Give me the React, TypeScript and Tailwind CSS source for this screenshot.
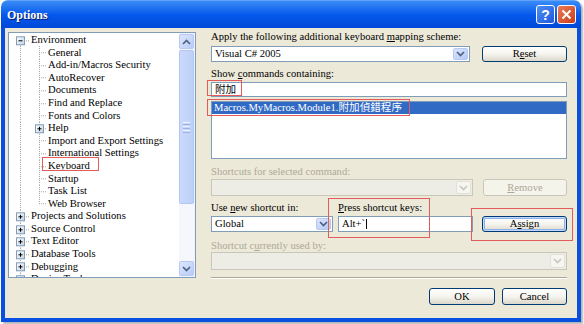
import React from "react";

type Node = { label: string; level: 0 | 1; box?: "plus" | "minus"; first?: boolean; lastChild?: boolean };

const nodes: Node[] = [
  { label: "Environment", level: 0, box: "minus", first: true },
  { label: "General", level: 1 },
  { label: "Add-in/Macros Security", level: 1 },
  { label: "AutoRecover", level: 1 },
  { label: "Documents", level: 1 },
  { label: "Find and Replace", level: 1 },
  { label: "Fonts and Colors", level: 1 },
  { label: "Help", level: 1, box: "plus" },
  { label: "Import and Export Settings", level: 1 },
  { label: "International Settings", level: 1 },
  { label: "Keyboard", level: 1 },
  { label: "Startup", level: 1 },
  { label: "Task List", level: 1 },
  { label: "Web Browser", level: 1, lastChild: true },
  { label: "Projects and Solutions", level: 0, box: "plus" },
  { label: "Source Control", level: 0, box: "plus" },
  { label: "Text Editor", level: 0, box: "plus" },
  { label: "Database Tools", level: 0, box: "plus" },
  { label: "Debugging", level: 0, box: "plus" },
  { label: "Device Tools", level: 0, box: "plus" },
];

const RH = 12.6;
const DOT = "#A5A5A5";

function ExpBox({ cx, cy, kind }: { cx: number; cy: number; kind: "plus" | "minus" }) {
  return (
    <g>
      <rect x={cx - 4} y={cy - 4} width={8} height={8} fill="url(#boxg)" stroke="#7F9DB9" strokeWidth={1} />
      <line x1={cx - 2} y1={cy} x2={cx + 2} y2={cy} stroke="#000" strokeWidth={1} />
      {kind === "plus" && <line x1={cx} y1={cy - 2} x2={cx} y2={cy + 2} stroke="#000" strokeWidth={1} />}
    </g>
  );
}

function Connector({ n }: { n: Node }) {
  const cy = RH / 2;
  const w = n.level === 0 ? 22 : 39;
  return (
    <svg width={w} height={RH} viewBox={`0 0 ${w} ${RH}`} className="shrink-0">
      <defs>
        <linearGradient id="boxg" x1="0" y1="0" x2="1" y2="1">
          <stop offset="0" stopColor="#FFFFFF" />
          <stop offset="1" stopColor="#C6D1E0" />
        </linearGradient>
      </defs>
      {n.level === 0 ? (
        <>
          <line x1={11.5} y1={n.first ? cy : 0} x2={11.5} y2={RH} stroke={DOT} strokeDasharray="1 1" />
          <line x1={11} y1={cy + 0.5} x2={21} y2={cy + 0.5} stroke={DOT} strokeDasharray="1 1" />
          {n.box && <ExpBox cx={11.5} cy={cy + 0.5} kind={n.box} />}
        </>
      ) : (
        <>
          <line x1={11.5} y1={0} x2={11.5} y2={RH} stroke={DOT} strokeDasharray="1 1" />
          <line x1={30.5} y1={0} x2={30.5} y2={n.lastChild ? cy : RH} stroke={DOT} strokeDasharray="1 1" />
          <line x1={30} y1={cy + 0.5} x2={38} y2={cy + 0.5} stroke={DOT} strokeDasharray="1 1" />
          {n.box && <ExpBox cx={30.5} cy={cy + 0.5} kind={n.box} />}
        </>
      )}
    </svg>
  );
}

function Chevron({ color = "#4D6185", up = false }: { color?: string; up?: boolean }) {
  return (
    <svg width="9" height="6" viewBox="0 0 9 6">
      <path
        d={up ? "M1 5 L4.5 1.5 L8 5" : "M1 1 L4.5 4.5 L8 1"}
        fill="none"
        stroke={color}
        strokeWidth="1.7"
      />
    </svg>
  );
}

function ScrollBar() {
  return (
    <div className="w-[16px] flex flex-col bg-[#F1F3FB] py-[1px] pr-[1px]">
      <div className="h-[15px] rounded-[2px] border border-[#B7C9F3] bg-gradient-to-br from-[#DCE6FD] to-[#B9CCF7] flex items-center justify-center">
        <Chevron up />
      </div>
      <div className="mt-[1px] h-[154px] rounded-[2px] border border-[#B3C6F2] bg-gradient-to-r from-[#CAD9FC] to-[#BED0F8] flex flex-col items-center justify-center gap-[1px]">
        <div className="w-[7px] h-[1px] bg-[#EEF3FE]" />
        <div className="w-[7px] h-[1px] bg-[#9DB3E6]" />
        <div className="w-[7px] h-[1px] bg-[#EEF3FE]" />
        <div className="w-[7px] h-[1px] bg-[#9DB3E6]" />
        <div className="w-[7px] h-[1px] bg-[#EEF3FE]" />
        <div className="w-[7px] h-[1px] bg-[#9DB3E6]" />
      </div>
      <div className="flex-1 bg-[#F6F7FC]" />
      <div className="h-[15px] rounded-[2px] border border-[#B7C9F3] bg-gradient-to-br from-[#DCE6FD] to-[#B9CCF7] flex items-center justify-center">
        <Chevron />
      </div>
    </div>
  );
}

function Tree() {
  return (
    <div className="w-[188px] h-[246px] border border-[#7F9DB9] bg-white flex overflow-hidden shrink-0">
      <div className="flex-1 overflow-hidden pt-[0.7px]">
        {nodes.map((n) => (
          <div key={n.label} className="flex items-center h-[12.6px] whitespace-nowrap">
            <Connector n={n} />
            <span className="leading-[12px]">{n.label}</span>
          </div>
        ))}
      </div>
      <ScrollBar />
    </div>
  );
}

function DropBtn({ disabled }: { disabled?: boolean }) {
  return disabled ? (
    <div className="w-[15px] m-[1px] rounded-[2px] border border-[#E2E1DA] bg-[#F6F5EF] flex items-center justify-center">
      <Chevron color="#C9C7BA" />
    </div>
  ) : (
    <div className="w-[15px] m-[1px] rounded-[2px] border border-[#B7C9F3] bg-gradient-to-br from-[#DCE6FD] to-[#B5C9F6] flex items-center justify-center">
      <Chevron />
    </div>
  );
}

const btn =
  "rounded-[3px] border border-[#003C74] bg-gradient-to-b from-[#FFFFFF] via-[#F5F4EE] to-[#DCD7CB] flex items-center justify-center";

export default function App() {
  return (
    <div className="relative w-[584px] h-[324px] bg-white overflow-hidden font-['Liberation_Serif','Noto_Sans_CJK_TC',serif] text-[10.6px] leading-[12px] text-black">
      <div className="ml-[1px] w-[580px] h-[322px] flex flex-col rounded-t-[7px] overflow-hidden shadow-[2px_2px_2px_rgba(0,0,0,0.3)]">
        {/* Title bar */}
        <div className="h-[28px] shrink-0 flex items-center bg-gradient-to-b from-[#3A8CF6] via-[#0659EC] to-[#0048D8] border-t border-[#5FA2F8]">
          <span className="ml-[6px] font-['Liberation_Serif',serif] font-bold text-[12px] text-white [text-shadow:1px_1px_0_#0A1E6E]">
            Options
          </span>
          <div className="ml-auto mr-[5px] flex gap-[2px]">
            <div className="w-[19px] h-[19px] rounded-[3px] border border-white bg-gradient-to-br from-[#4F8DF6] to-[#1F58DA] flex items-center justify-center text-white font-['Liberation_Sans',sans-serif] font-bold text-[14px] leading-none">
              ?
            </div>
            <div className="w-[19px] h-[19px] rounded-[3px] border border-white bg-gradient-to-br from-[#EB7A55] to-[#C83C14] flex items-center justify-center">
              <svg width="11" height="11" viewBox="0 0 11 11">
                <path d="M1.5 1.5 L9.5 9.5 M9.5 1.5 L1.5 9.5" stroke="#fff" strokeWidth="2" />
              </svg>
            </div>
          </div>
        </div>
        {/* Client */}
        <div className="flex-1 flex bg-[#ECE9D8] border-x-[4px] border-b-[4px] border-[#0A50E0] pl-[3px] pt-[4px]">
          <Tree />
          <div className="ml-[15px] w-[356px] flex flex-col -mt-[1px]">
            <div className="h-[12px]">
              Apply the following additional keyboard <span className="underline">m</span>apping scheme:
            </div>
            <div className="mt-[3px] flex h-[16px] gap-[12px]">
              <div className="w-[259px] flex border border-[#7F9DB9] bg-white">
                <div className="flex-1 px-[3px] flex items-center">Visual C# 2005</div>
                <DropBtn />
              </div>
              <div className={`w-[85px] ${btn}`}>
                R<span className="underline">e</span>set
              </div>
            </div>
            <div className="mt-[6px] h-[12px]">
              Show <span className="underline">c</span>ommands containing:
            </div>
            <div className="mt-[2px] h-[15px] border border-[#7F9DB9] bg-white px-[3px] flex items-center">附加</div>
            <div className="mt-[4px] h-[58px] border border-[#7F9DB9] bg-white">
              <div className="h-[12px] bg-[#316AC5] text-white px-[2px] flex items-center">
                Macros.MyMacros.Module1.附加偵錯程序
              </div>
            </div>
            <div className="mt-[7px] h-[12px] text-[#ACA899]">
              Shortcuts for selected command:
            </div>
            <div className="mt-[1px] flex h-[17px] gap-[10px]">
              <div className="w-[262px] flex border border-[#C9C7BA] bg-[#EEEDE5]">
                <div className="flex-1" />
                <DropBtn disabled />
              </div>
              <div className="w-[84px] rounded-[3px] border border-[#C9C7BA] bg-[#F5F4EA] text-[#ACA899] flex items-center justify-center">
                <span className="underline">R</span>emove
              </div>
            </div>
            <div className="mt-[6px] h-[12px] flex">
              <div className="w-[127px]">
                Use <span className="underline">n</span>ew shortcut in:
              </div>
              <div>
                <span className="underline">P</span>ress shortcut keys:
              </div>
            </div>
            <div className="mt-[2px] flex h-[16px]">
              <div className="w-[122px] flex border border-[#7F9DB9] bg-white">
                <div className="flex-1 px-[3px] flex items-center">Global</div>
                <DropBtn />
              </div>
              <div className="ml-[5px] w-[135px] border border-[#7F9DB9] bg-white px-[3px] flex items-center">
                Alt+`<span className="inline-block w-[1px] h-[10px] bg-black ml-[1px]" />
              </div>
              <div
                className={`ml-[9px] w-[85px] ${btn} shadow-[inset_0_0_0_1px_#C5D8FB,inset_0_0_0_2px_#8FB2EA]`}
              >
                A<span className="underline">s</span>sign
              </div>
            </div>
            <div className="mt-[8px] h-[12px] text-[#ACA899]">
              Shortcut c<span className="underline">u</span>rrently used by:
            </div>
            <div className="flex h-[18px] border border-[#C9C7BA] bg-[#EEEDE5]">
              <div className="flex-1" />
              <DropBtn disabled />
            </div>
            <div className="mt-[7px] h-[2px] border-t border-[#ACA899] border-b border-b-white" />
            <div className="mt-[9px] flex justify-end gap-[7px] h-[17px]">
              <div className={`w-[66px] ${btn}`}>OK</div>
              <div className={`w-[65px] ${btn}`}>Cancel</div>
            </div>
          </div>
        </div>
      </div>

      {/* Red annotation boxes */}
      <div className="absolute left-[42px] top-[157px] w-[57px] h-[14px] border border-[#E45B5B]" />
      <div className="absolute left-[207px] top-[80px] w-[35px] h-[16px] border border-[#E45B5B]" />
      <div className="absolute left-[207px] top-[99px] w-[203px] h-[17px] border border-[#E45B5B]" />
      <div className="absolute left-[328px] top-[198px] w-[102px] h-[40px] border border-[#E45B5B]" />
      <div className="absolute left-[471px] top-[208px] w-[102px] h-[33px] border border-[#E45B5B]" />
    </div>
  );
}
